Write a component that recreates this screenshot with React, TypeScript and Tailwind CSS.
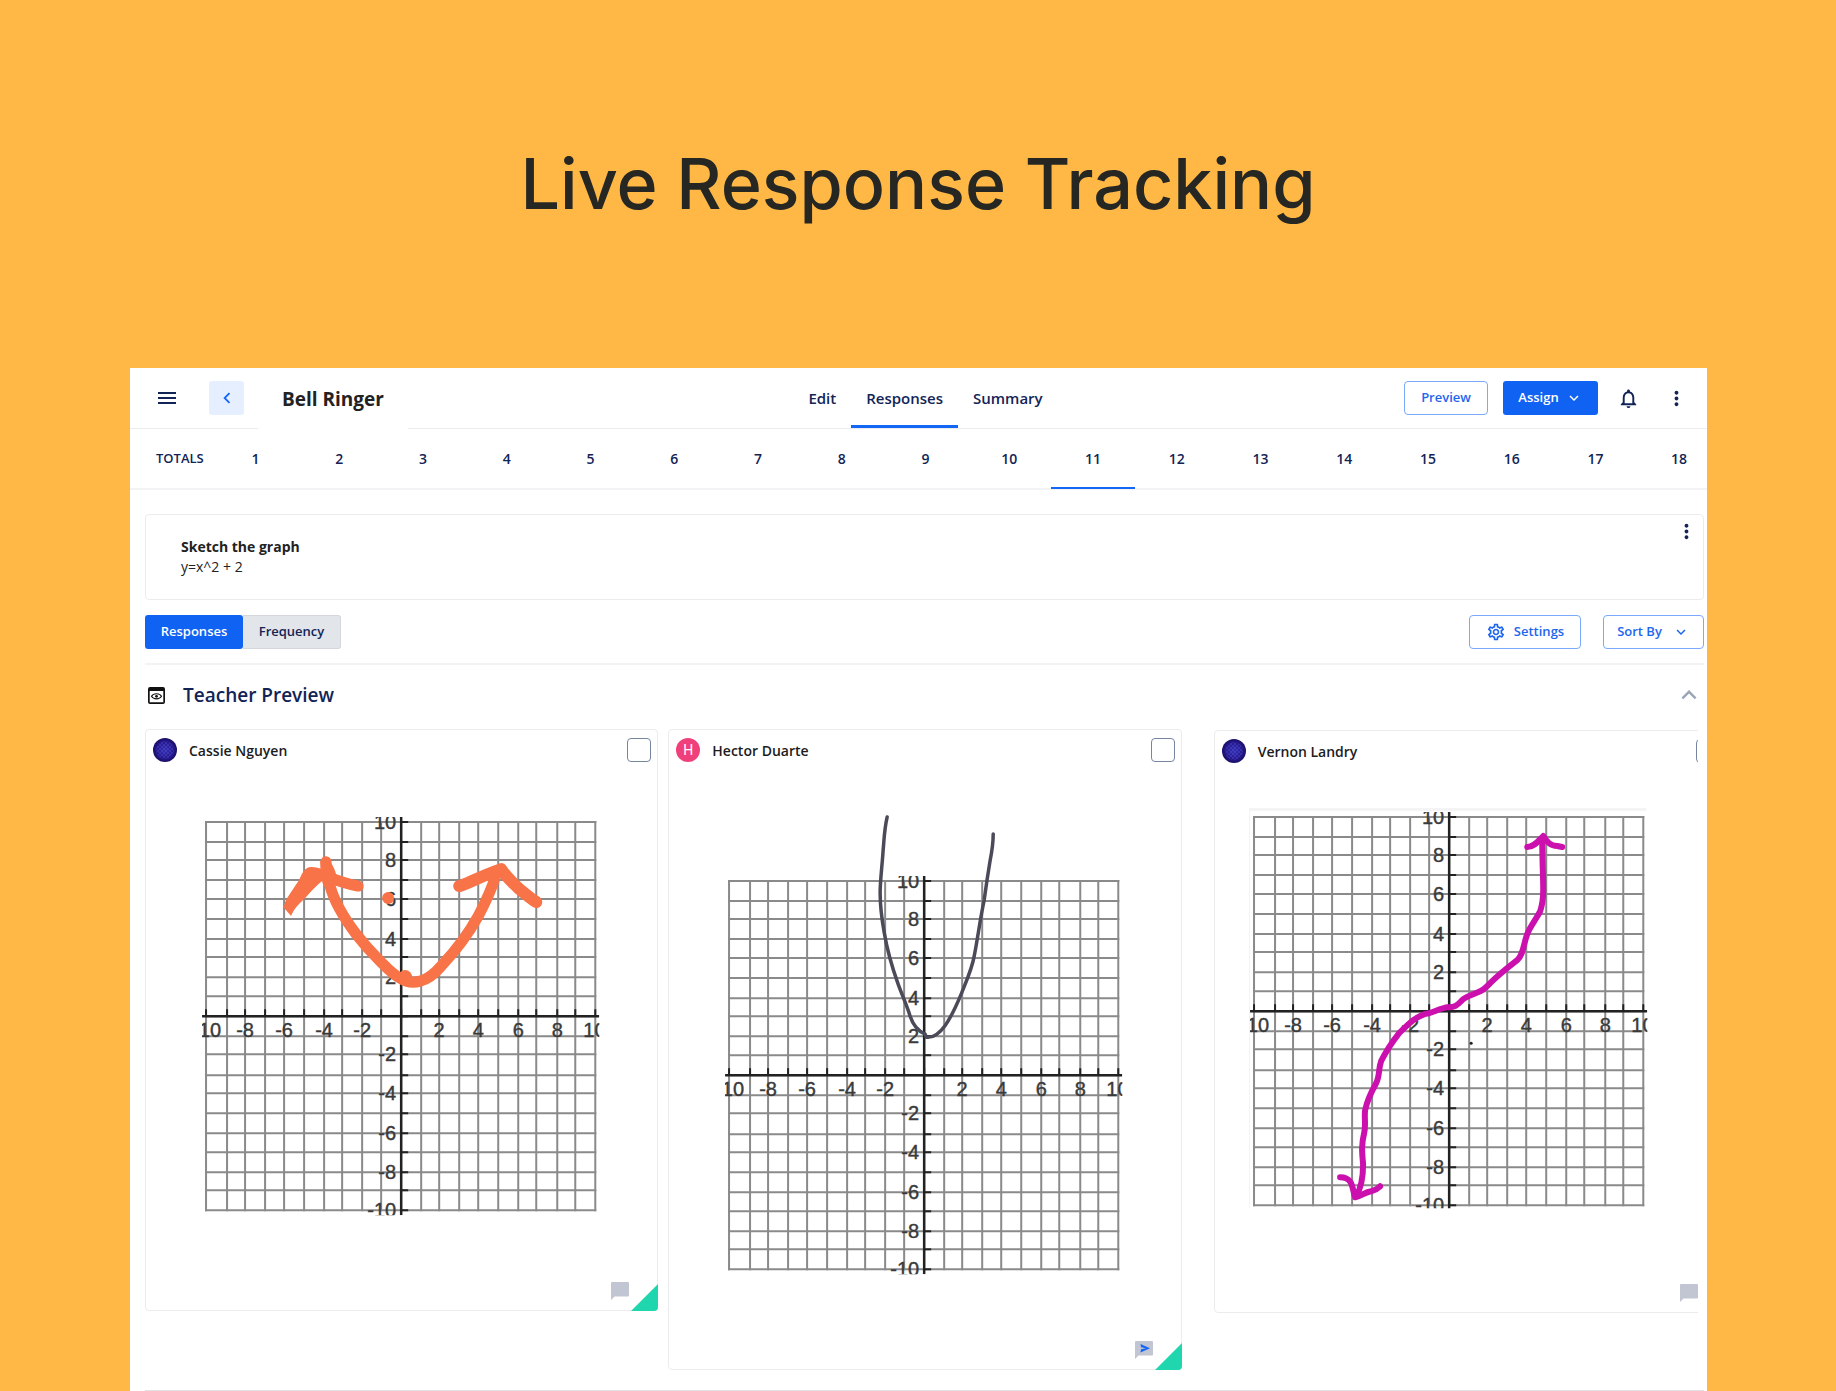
import type { ReactNode } from "react";
import {
  MdChevronLeft,
  MdExpandLess,
  MdExpandMore,
  MdMenu,
  MdMoreVert,
  MdNotificationsNone,
  MdOutlineSettings,
} from "react-icons/md";

const XS = [4, 25, 43, 63, 82, 102, 122, 140, 160, 179, 199, 219, 237, 257, 276, 296, 316, 334, 355, 373, 393];
const YS = [5, 25, 43, 63, 82, 102, 122, 140, 160, 179, 199, 219, 237, 258, 276, 296, 316, 335, 355, 373, 393];

/* Coordinate plane from -10 to 10, drawn with its corner at (x, y). */
function Plane({ x, y, id, height = 398 }: { x: number; y: number; id: string; height?: number }) {
  return (
    <g transform={`translate(${x} ${y})`} clipPath={`url(#${id})`}>
      <clipPath id={id}>
        <rect x="0" y="0" width="397" height={height} />
      </clipPath>
      <g stroke="#8a8a8a" strokeWidth="2">
        {XS.map((v) => (
          <line key={`x${v}`} x1={v} x2={v} y1="4" y2="394" />
        ))}
        {YS.map((v) => (
          <line key={`y${v}`} x1="3" x2="394" y1={v} y2={v} />
        ))}
      </g>
      <g stroke="#222222" strokeWidth="2">
        <line x1="0" x2="397" y1="199" y2="199" strokeWidth="2.5" />
        <line x1="199" x2="199" y1="0" y2="398" strokeWidth="2.5" />
        {XS.map((v) => (
          <line key={`tx${v}`} x1={v} x2={v} y1="192" y2="199" />
        ))}
        {YS.map((v) => (
          <line key={`ty${v}`} x1="199" x2="206" y1={v} y2={v} />
        ))}
      </g>
      <g fontFamily="'Liberation Sans', sans-serif" fontSize="20" fill="#3a3a3a" stroke="#3a3a3a" strokeWidth="0.4">
        <text x="19" y="220" textAnchor="end">-10</text>
        {[-8, -6, -4, -2, 2, 4, 6, 8].map((n) => (
          <text key={n} x={XS[n + 10]} y="220" textAnchor="middle">
            {n}
          </text>
        ))}
        <text x="381" y="220">10</text>
        {[10, 8, 6, 4, 2, -2, -4, -6, -8, -10].map((n) => (
          <text key={n} x="194" y={YS[10 - n] + 7} textAnchor="end">
            {n}
          </text>
        ))}
      </g>
    </g>
  );
}

function HexAvatar({ id }: { id: string }) {
  return (
    <svg viewBox="0 0 24 24" className="size-6 shrink-0" aria-hidden="true">
      <defs>
        <radialGradient id={id}>
          <stop offset="0" stopColor="#3530b4" />
          <stop offset="0.7" stopColor="#26188e" />
          <stop offset="1" stopColor="#190e63" />
        </radialGradient>
        <pattern id={`${id}-dots`} width="4" height="4" patternUnits="userSpaceOnUse">
          <circle cx="1" cy="1" r="0.7" fill="#6f78f5" />
          <circle cx="3" cy="3" r="0.7" fill="#6f78f5" />
        </pattern>
      </defs>
      <circle cx="12" cy="12" r="12" fill={`url(#${id})`} />
      <circle cx="12" cy="12" r="9" fill={`url(#${id}-dots)`} opacity="0.6" />
    </svg>
  );
}

function PreviewIcon() {
  return (
    <svg viewBox="0 0 17 17" className="mx-[3px] size-[17px]" aria-hidden="true">
      <path
        fill="#111111"
        fillRule="evenodd"
        d="M2 0h13a2 2 0 0 1 2 2v13a2 2 0 0 1-2 2H2a2 2 0 0 1-2-2V2a2 2 0 0 1 2-2zM1.700 4v11.300h13.600V4z"
      />
      <path d="M3.500 9.300C5.500 5.900 11.500 5.900 13.500 9.300C11.500 12.700 5.500 12.700 3.500 9.300z" fill="none" stroke="#111111" strokeWidth="1.100" />
      <circle cx="8.500" cy="9.300" r="1.400" fill="#111111" />
    </svg>
  );
}

function ChatBubble({ sent }: { sent?: boolean }) {
  return (
    <svg viewBox="0 0 18 18" className="size-[18px]" aria-hidden="true">
      <path d="M1 0h16a1 1 0 0 1 1 1v12.500a1 1 0 0 1-1 1H3.500L0 18V1a1 1 0 0 1 1-1z" fill="#c1c6d2" />
      {sent && <path d="M5.500 3L15 7.300L5.500 11.600L6 8.300L11 7.300L6 6.300z" fill="#1466f5" />}
    </svg>
  );
}

type CardProps = {
  name: string;
  avatar: ReactNode;
  sent?: boolean;
  children: ReactNode;
};

function ResponseCard({ name, avatar, sent, children }: CardProps) {
  return (
    <article className="relative rounded-[4px] border border-[#ececee] bg-white">
      <header className="flex h-[47px] items-center gap-3 pr-1.5 pb-2 pl-[7px]">
        {avatar}
        <label htmlFor={name} className="flex-1 pt-0.5 text-[14px] font-semibold text-[#1c1c1c]">
          {name}
        </label>
        <input
          id={name}
          type="checkbox"
          className="size-6 shrink-0 appearance-none rounded-[4px] border border-[#76869f] bg-white"
        />
      </header>
      {children}
      <footer className="flex h-9 justify-end pt-2 pr-7">
        <button type="button" aria-label={`Comment on ${name}`} className="size-[18px]">
          <ChatBubble sent={sent} />
        </button>
      </footer>
      <svg viewBox="0 0 27 27" className="absolute -right-px -bottom-px size-[27px]" aria-hidden="true">
        <path d="M27 0v23a4 4 0 0 1-4 4H0z" fill="#20d6ae" />
      </svg>
    </article>
  );
}

const outlineButton =
  "flex h-[34px] items-center justify-center rounded-[4px] border border-[#7ba9fb] bg-white text-[13px] font-semibold text-[#1d66ee]";

export default function App() {
  return (
    <div className="flex min-h-screen flex-col bg-[#ffb746] font-['Open_Sans',sans-serif] text-[#122456]">
      <h1 className="pt-[139px] pb-[139px] text-center font-[Inter,sans-serif] text-[70px] leading-[90px] font-medium text-[#262723]">
        Live Response Tracking
      </h1>

      <main className="mr-[129px] ml-[130px] flex-1 overflow-hidden bg-white">
        <header className="relative flex h-[61px] items-center border-b border-[#ececee]">
          <div className="flex flex-1 items-center self-stretch pl-[25px]">
            <button type="button" aria-label="Menu">
              <MdMenu size={24} />
            </button>
            <button
              type="button"
              aria-label="Back"
              className="ml-[30px] flex h-[34px] w-[35px] items-center justify-center rounded-[3px] bg-[#e6efff] text-[#1466f5]"
            >
              <MdChevronLeft size={22} />
            </button>
            <div className="-mb-px ml-[14px] flex w-[150px] items-center self-stretch bg-white pt-0.5 pl-6">
              <h2 className="text-[19px] font-bold whitespace-nowrap text-[#222222]">Bell Ringer</h2>
            </div>
          </div>

          <nav className="ml-2 flex h-full text-[15px] font-semibold">
            <a href="#edit" className="flex items-center px-[15px]">
              Edit
            </a>
            <a href="#responses" className="flex items-center border-b-[3px] border-[#1466f5] px-[15px] pt-[3px]">
              Responses
            </a>
            <a href="#summary" className="flex items-center px-[15px]">
              Summary
            </a>
          </nav>

          <div className="flex flex-1 items-center justify-end pr-[19px]">
            <button type="button" className={`${outlineButton} w-[84px]`}>
              Preview
            </button>
            <button
              type="button"
              className="ml-[15px] flex h-[34px] w-[95px] items-center justify-center gap-1.5 rounded-[3px] bg-[#1062f3] text-[13px] font-semibold text-white"
            >
              Assign
              <MdExpandMore size={18} />
            </button>
            <button type="button" aria-label="Notifications" className="ml-[19px]">
              <MdNotificationsNone size={23} />
            </button>
            <button type="button" aria-label="More options" className="ml-[25px]">
              <MdMoreVert size={23} />
            </button>
          </div>
        </header>

        <nav className="-mr-[14px] grid h-[61px] grid-cols-[repeat(19,minmax(0,1fr))] border-b-2 border-[#f3f3f5] text-[14px] font-semibold">
          <a href="#totals" className="flex items-center pl-[26px] text-[13px]">
            TOTALS
          </a>
          {Array.from({ length: 18 }, (_, i) => i + 1).map((n) => (
            <a
              key={n}
              href={`#question-${n}`}
              className={
                n === 11
                  ? "-mb-px flex items-center justify-center border-b-2 border-[#1466f5] pt-px"
                  : "flex items-center justify-center"
              }
            >
              {n}
            </a>
          ))}
        </nav>

        <div className="pr-[3px] pl-[15px]">
          <section className="mt-6 flex h-[86px] items-start justify-between rounded-[4px] border border-[#ececee] pt-[5px] pr-[5px] pl-[35px]">
            <div className="pt-[17px] text-[14px] leading-5 text-[#222222]">
              <h3 className="font-bold">Sketch the graph</h3>
              <p>y=x^2 + 2</p>
            </div>
            <button type="button" aria-label="Question options">
              <MdMoreVert size={23} />
            </button>
          </section>

          <div className="mt-[15px] flex items-center border-b-2 border-[#f3f3f5] pb-3.5 text-[13px] font-semibold">
            <button type="button" className="h-[34px] w-[98px] rounded-[3px] bg-[#1062f3] text-white">
              Responses
            </button>
            <button
              type="button"
              className="h-[34px] w-[98px] rounded-r-[3px] border border-l-0 border-[#d5d7dc] bg-[#e2e5e9]"
            >
              Frequency
            </button>
            <button type="button" className={`${outlineButton} ml-auto w-28 gap-2`}>
              <MdOutlineSettings size={20} />
              Settings
            </button>
            <button type="button" className={`${outlineButton} ml-[22px] w-[101px] gap-2.5`}>
              Sort By
              <MdExpandMore size={18} />
            </button>
          </div>

          <div className="mb-1 flex h-[60px] items-center">
            <PreviewIcon />
            <h2 className="ml-[15px] flex-1 text-[19px] font-semibold">Teacher Preview</h2>
            <button type="button" aria-label="Collapse" className="text-[#9aa5b6]">
              <MdExpandLess size={30} />
            </button>
          </div>

          <div className="mr-1.5 grid grid-cols-[513fr_513fr_506fr] items-start gap-2.5 pb-5">
            <ResponseCard name="Cassie Nguyen" avatar={<HexAvatar id="avatar-cassie" />}>
              <svg viewBox="146 777 511 497" className="block w-full" role="img" aria-label="Graph by Cassie Nguyen">
                <Plane id="plane-cassie" x={202} y={817} />
                <g fill="none" stroke="#f87347" strokeLinecap="round" strokeLinejoin="round">
                  <path
                    strokeWidth="11"
                    d="M326 862C325 872 326 880 330 886C334 901 344 918 356 934C363 943 371 952 378 959C387 968 392 974 400 978C406 982 413 983 420 981C428 979 435 973 441 966C455 951 468 934 478 916C486 901 492 888 496 874"
                  />
                  <path strokeWidth="12" d="M459 886C465 885 478 877 501 869C506 877 512 882 518 888C524 893 530 898 536 902" />
                  <path strokeWidth="11" d="M326 876C338 881 348 884 358 886" />
                </g>
                <g fill="#f87347">
                  <path d="M291 916L284 908C284 902 287 898 291 892L299 880C302 873 305 867 311 867C316 867 319 868 321 869L320 862C322 854 330 855 331 863C334 868 336 872 337 880L322 881C316 886 311 891 306 897C300 903 294 908 291 916z" />
                  <circle cx="388" cy="898" r="6" />
                  <circle cx="405" cy="977" r="7" />
                </g>
              </svg>
            </ResponseCard>

            <ResponseCard
              name="Hector Duarte"
              sent
              avatar={
                <span className="flex size-6 shrink-0 items-center justify-center rounded-full bg-[#f0407c] pt-px font-[Roboto,sans-serif] text-[14px] leading-none text-white">
                  H
                </span>
              }
            >
              <svg viewBox="669 777 511 556" className="block w-full" role="img" aria-label="Graph by Hector Duarte">
                <Plane id="plane-hector" x={725} y={876} />
                <path
                  fill="none"
                  stroke="#4a4a59"
                  strokeWidth="3.5"
                  strokeLinecap="round"
                  strokeLinejoin="round"
                  d="M887 817C884 830 884 840 883 850C882 866 880 880 880 893C880 908 882 921 884 932C887 950 893 970 898 984C902 995 906 1004 909 1013C912 1024 918 1031 925 1034L926 1037C940 1039 951 1018 961 994C967 979 972 968 974 956C978 936 980 918 984 900C986 885 988 872 990 860C992 850 993 842 993 834"
                />
              </svg>
            </ResponseCard>

            <div className="mt-px overflow-hidden pl-[22px]">
              <div className="-mr-[29px]">
                <ResponseCard name="Vernon Landry" avatar={<HexAvatar id="avatar-vernon" />}>
                  <svg viewBox="1215 778 511 498" className="block w-full" role="img" aria-label="Graph by Vernon Landry">
                    <rect x="1249" y="808" width="397" height="3" fill="#f4f4f4" />
                    <rect x="1249" y="811" width="1" height="397" fill="#f4f4f4" />
                    <Plane id="plane-vernon" x={1250} y={812} height={396} />
                    <g fill="none" stroke="#cb10ae" strokeWidth="6" strokeLinecap="round" strokeLinejoin="round">
                      <path d="M1542 838C1542 860 1543 875 1543 890C1543 900 1542 905 1540 911C1536 919 1530 926 1527 934C1523 945 1523 955 1517 960C1508 967 1499 974 1491 982C1487 986 1484 990 1478 992C1472 995 1466 996 1462 1000C1458 1004 1455 1008 1447 1007C1441 1008 1436 1011 1429 1013C1418 1014 1408 1024 1399 1033C1392 1042 1386 1051 1381 1061C1378 1069 1380 1075 1376 1083C1371 1092 1367 1100 1365 1110C1364 1118 1366 1125 1364 1133C1361 1145 1362 1153 1363 1164C1363 1178 1361 1188 1356 1196" />
                      <path d="M1527 847C1534 847 1538 841 1543 836C1547 842 1550 846 1557 846L1562 847" />
                      <path d="M1340 1177C1354 1177 1352 1190 1355 1197C1362 1195 1365 1192 1371 1191C1375 1190 1377 1189 1380 1186" />
                    </g>
                    <circle cx="1471" cy="1043" r="1.500" fill="#222222" />
                  </svg>
                </ResponseCard>
              </div>
            </div>
          </div>

          <hr className="border-[#e2e2e4]" />
        </div>
      </main>
    </div>
  );
}
